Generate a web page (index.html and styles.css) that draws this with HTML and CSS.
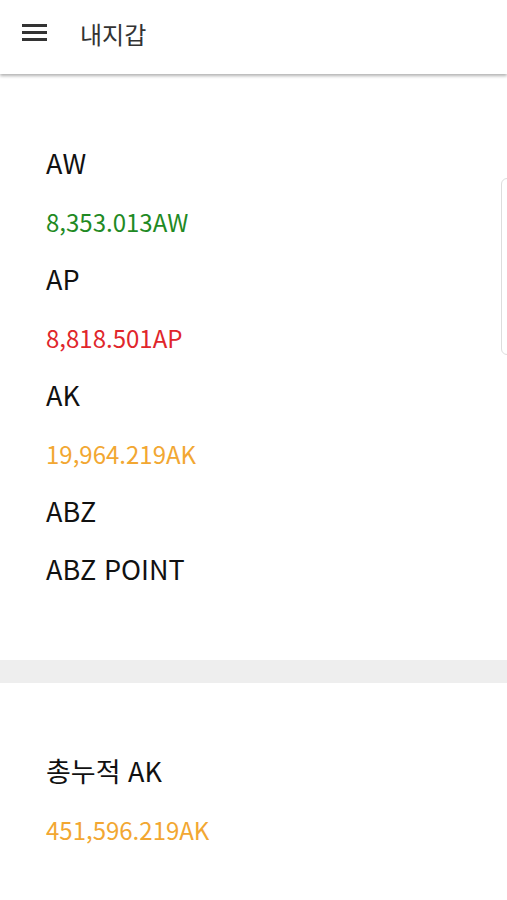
FILE: index.html
```html
<!DOCTYPE html>
<html lang="ko">
<head>
  <meta charset="UTF-8" />
  <title>내지갑</title>
  <meta name="viewport" content="width=device-width, initial-scale=1.0" />
  <link rel="stylesheet" href="styles.css">
</head>
<body>
  <header class="topbar">
    <svg class="menu-icon" width="26" height="20" viewBox="0 0 26 20">
      <path d="M0 2.5h25M0 9.5h25M0 16.5h25" stroke="#333" stroke-width="2.8" fill="none" />
    </svg>
    <h1 class="title">내지갑</h1>
  </header>

  <section class="wallet">
    <div class="label">AW</div>
    <div class="value green">8,353.013AW</div>
    <div class="label">AP</div>
    <div class="value red">8,818.501AP</div>
    <div class="label">AK</div>
    <div class="value orange">19,964.219AK</div>
    <div class="label">ABZ</div>
    <div class="label">ABZ POINT</div>
  </section>

  <div class="divider"></div>

  <section class="wallet total">
    <div class="label">총누적 AK</div>
    <div class="value orange">451,596.219AK</div>
  </section>

  <div class="side-handle"></div>
</body>
</html>
```

FILE: styles.css
```css
html, body {
  margin: 0;
  padding: 0;
  background: #fff;
  font-family: 'Noto Sans CJK KR', 'Noto Sans', sans-serif;
  color: #111;
}

.topbar {
  height: 74px;
  display: flex;
  align-items: center;
  padding: 0 22px;
  background: #fff;
  box-shadow: 0 2px 3px rgba(0,0,0,0.3);
  position: relative;
  z-index: 1;
  box-sizing: border-box;
}

.menu-icon {
  margin-top: -8px;
}

.title {
  margin: -7px 0 0 32px;
  font-size: 24px;
  font-weight: normal;
  color: #333;
}

.wallet {
  padding: 60px 46px 62px;
}

.wallet.total {
  padding-top: 59px;
}

.label {
  height: 58px;
  line-height: 58px;
  font-size: 27px;
  color: #111;
}

.value {
  height: 58px;
  line-height: 60px;
  font-size: 24px;
}

.green {
  color: #1f8a24;
}

.red {
  color: #e0262b;
}

.orange {
  color: #f2a732;
}

.divider {
  height: 23px;
  background: #eeeeee;
}

.side-handle {
  position: absolute;
  top: 178px;
  right: -8px;
  width: 12px;
  height: 175px;
  border: 1px solid #ddd;
  border-radius: 6px;
  background: #fff;
}
```
